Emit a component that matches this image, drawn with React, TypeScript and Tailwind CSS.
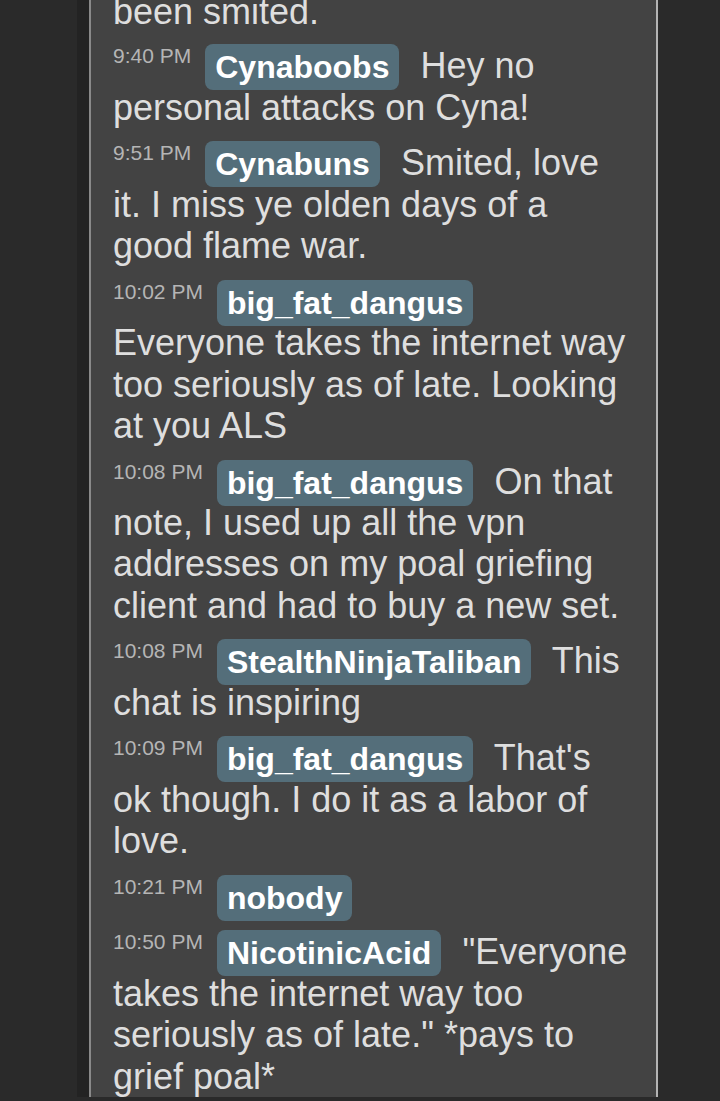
const messages = [
  { time: '9:40 PM', user: 'Cynaboobs', text: 'Hey no personal attacks on Cyna!' },
  { time: '9:51 PM', user: 'Cynabuns', text: 'Smited, love it. I miss ye olden days of a good flame war.' },
  {
    time: '10:02 PM',
    user: 'big_fat_dangus',
    text: 'Everyone takes the internet way too seriously as of late. Looking at you ALS',
  },
  {
    time: '10:08 PM',
    user: 'big_fat_dangus',
    text: 'On that note, I used up all the vpn addresses on my poal griefing client and had to buy a new set.',
  },
  { time: '10:08 PM', user: 'StealthNinjaTaliban', text: 'This chat is inspiring' },
  { time: '10:09 PM', user: 'big_fat_dangus', text: "That's ok though. I do it as a labor of love." },
  { time: '10:21 PM', user: 'nobody', text: '' },
  {
    time: '10:50 PM',
    user: 'NicotinicAcid',
    text: '"Everyone takes the internet way too seriously as of late." *pays to grief poal*',
  },
]

export default function App(): JSX.Element {
  return (
    <div className="h-screen overflow-hidden bg-[#2a2a2a] font-['Liberation_Sans',Arial,sans-serif]">
      <div className="ml-[89px] min-h-full w-[569px] border-l-2 border-r-2 border-l-[#8a8a8a] border-r-[#b4b4b4] bg-[#434343] pl-[22px] pr-[22px] text-[36px] leading-[41.4px] text-[#dedede] shadow-[-12px_0_0_0_#232323]">
        <div className="-mt-[9px] mb-[12px]">been smited.</div>
        {messages.map((m, i) => (
          <div key={i} className="mb-[13.2px]">
            <span className="mr-[14px] align-top text-[21px] leading-[24px] text-[#b5b5b5]">{m.time}</span>
            <span className="mr-[11px] -mb-[4px] inline-block rounded-lg bg-[#546e7a] px-[10px] py-[4px] text-[32px] font-bold leading-[38px] text-white">
              {m.user}
            </span>{' '}
            {m.text}
          </div>
        ))}
      </div>
    </div>
  )
}
